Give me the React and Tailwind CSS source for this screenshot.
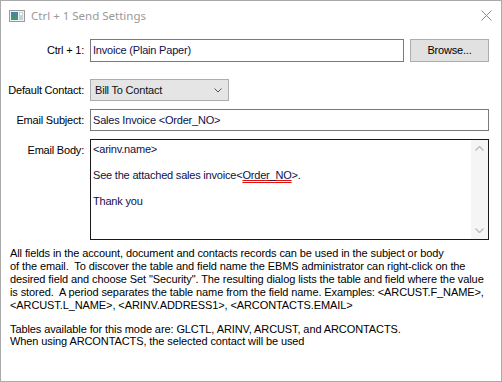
import React from 'react';

const sans = { fontFamily: '"Liberation Sans", Arial, sans-serif' };

function WinIcon() {
  return (
    <svg width="16" height="12" viewBox="0 0 16 12">
      <defs>
        <linearGradient id="g1" x1="0" y1="0" x2="0" y2="1">
          <stop offset="0" stopColor="#4a7fb0" />
          <stop offset="1" stopColor="#3f9a6a" />
        </linearGradient>
      </defs>
      <rect x="0.5" y="0.5" width="15" height="11" fill="#f2f2f2" stroke="#9a9a9a" />
      <rect x="2" y="2" width="7" height="8" fill="url(#g1)" />
      <rect x="10" y="2" width="4" height="8" fill="#c8d0d8" />
      <rect x="11" y="3" width="2" height="2" fill="#ffffff" />
    </svg>
  );
}

function Label({ children, top }) {
  return (
    <div className={`w-[83px] shrink-0 text-right text-[11px] tracking-[-0.2px] text-black ${top ? 'pt-[3px]' : ''}`}>
      {children}
    </div>
  );
}

export default function App() {
  return (
    <div style={sans} className="w-[502px] h-[382px] bg-white border border-[#aaaaaa] flex flex-col overflow-hidden">
      <div className="h-[29px] shrink-0 flex items-center pl-[8px] pr-[9px]">
        <WinIcon />
        <span className="ml-[6px] text-[11.5px] text-[#999999]" style={{ fontFamily: '"Noto Sans", "Open Sans", sans-serif' }}>
          Ctrl + 1 Send Settings
        </span>
        <svg className="ml-auto" width="11" height="11" viewBox="0 0 11 11">
          <path d="M0.5 0.5 L10.5 10.5 M10.5 0.5 L0.5 10.5" stroke="#8a8a8a" strokeWidth="1" />
        </svg>
      </div>

      <div className="flex flex-col">
        <div className="flex items-center mt-[9px]">
          <Label>Ctrl + 1:</Label>
          <div className="ml-[6px] w-[314px] h-[23px] border border-[#7a7a7a] flex items-center px-[2px] text-[11px] tracking-[-0.2px] text-[#10104a]">
            Invoice (Plain Paper)
          </div>
          <div className="ml-[6px] w-[79px] h-[23px] border border-[#adadad] bg-[#e1e1e1] flex items-center justify-center text-[11px] tracking-[-0.2px] text-black">
            Browse...
          </div>
        </div>

        <div className="flex items-center mt-[17px]">
          <Label>Default Contact:</Label>
          <div className="ml-[6px] w-[139px] h-[22px] border border-[#acacac] bg-[#e5e5e5] flex items-center pl-[4px] pr-[6px] text-[11px] tracking-[-0.2px] text-[#111111]">
            <span>Bill To Contact</span>
            <svg className="ml-auto" width="8" height="5" viewBox="0 0 8 5">
              <path d="M0.5 0.5 L4 4 L7.5 0.5" stroke="#555555" fill="none" strokeWidth="1" />
            </svg>
          </div>
        </div>

        <div className="flex items-center mt-[8px]">
          <Label>Email Subject:</Label>
          <div className="ml-[6px] w-[399px] h-[22px] border border-[#7a7a7a] flex items-center px-[2px] text-[11px] tracking-[-0.2px] text-[#10104a]">
            Sales Invoice &lt;Order_NO&gt;
          </div>
        </div>

        <div className="flex items-start mt-[8px]">
          <Label top>Email Body:</Label>
          <div className="ml-[6px] w-[399px] h-[101px] border border-[#1a1a1a] flex">
            <div className="flex-1 pl-[2px] pt-[3px] text-[11px] leading-[13px] tracking-[-0.2px] text-[#10104a]">
              <div>&lt;arinv.name&gt;</div>
              <div>&nbsp;</div>
              <div>
                See the attached sales invoice&lt;
                <span className="underline decoration-[#e01010] decoration-double decoration-1 underline-offset-[1px]">Order_NO</span>
                &gt;.
              </div>
              <div>&nbsp;</div>
              <div>Thank you</div>
            </div>
            <div className="w-[17px] bg-[#f5f5f5] flex flex-col items-center justify-between py-[6px]">
              <svg width="9" height="5" viewBox="0 0 9 5">
                <path d="M0.5 4.5 L4.5 0.5 L8.5 4.5" stroke="#bdbdbd" fill="none" strokeWidth="1.4" />
              </svg>
              <svg width="9" height="5" viewBox="0 0 9 5">
                <path d="M0.5 0.5 L4.5 4.5 L8.5 0.5" stroke="#bdbdbd" fill="none" strokeWidth="1.4" />
              </svg>
            </div>
          </div>
        </div>

        <div className="mt-[7px] pl-[9px] text-[11px] leading-[13px] tracking-[-0.1px] text-black whitespace-nowrap">
          <div>All fields in the account, document and contacts records can be used in the subject or body</div>
          <div>of the email.&nbsp; To discover the table and field name the EBMS administrator can right-click on the</div>
          <div>desired field and choose Set "Security". The resulting dialog lists the table and field where the value</div>
          <div>is stored.&nbsp; A period separates the table name from the field name. Examples: &lt;ARCUST.F_NAME&gt;,</div>
          <div>&lt;ARCUST.L_NAME&gt;, &lt;ARINV.ADDRESS1&gt;, &lt;ARCONTACTS.EMAIL&gt;</div>
          <div className="mt-[11px]">Tables available for this mode are: GLCTL, ARINV, ARCUST, and ARCONTACTS.</div>
          <div className="-mt-[1px]">When using ARCONTACTS, the selected contact will be used</div>
        </div>
      </div>
    </div>
  );
}
